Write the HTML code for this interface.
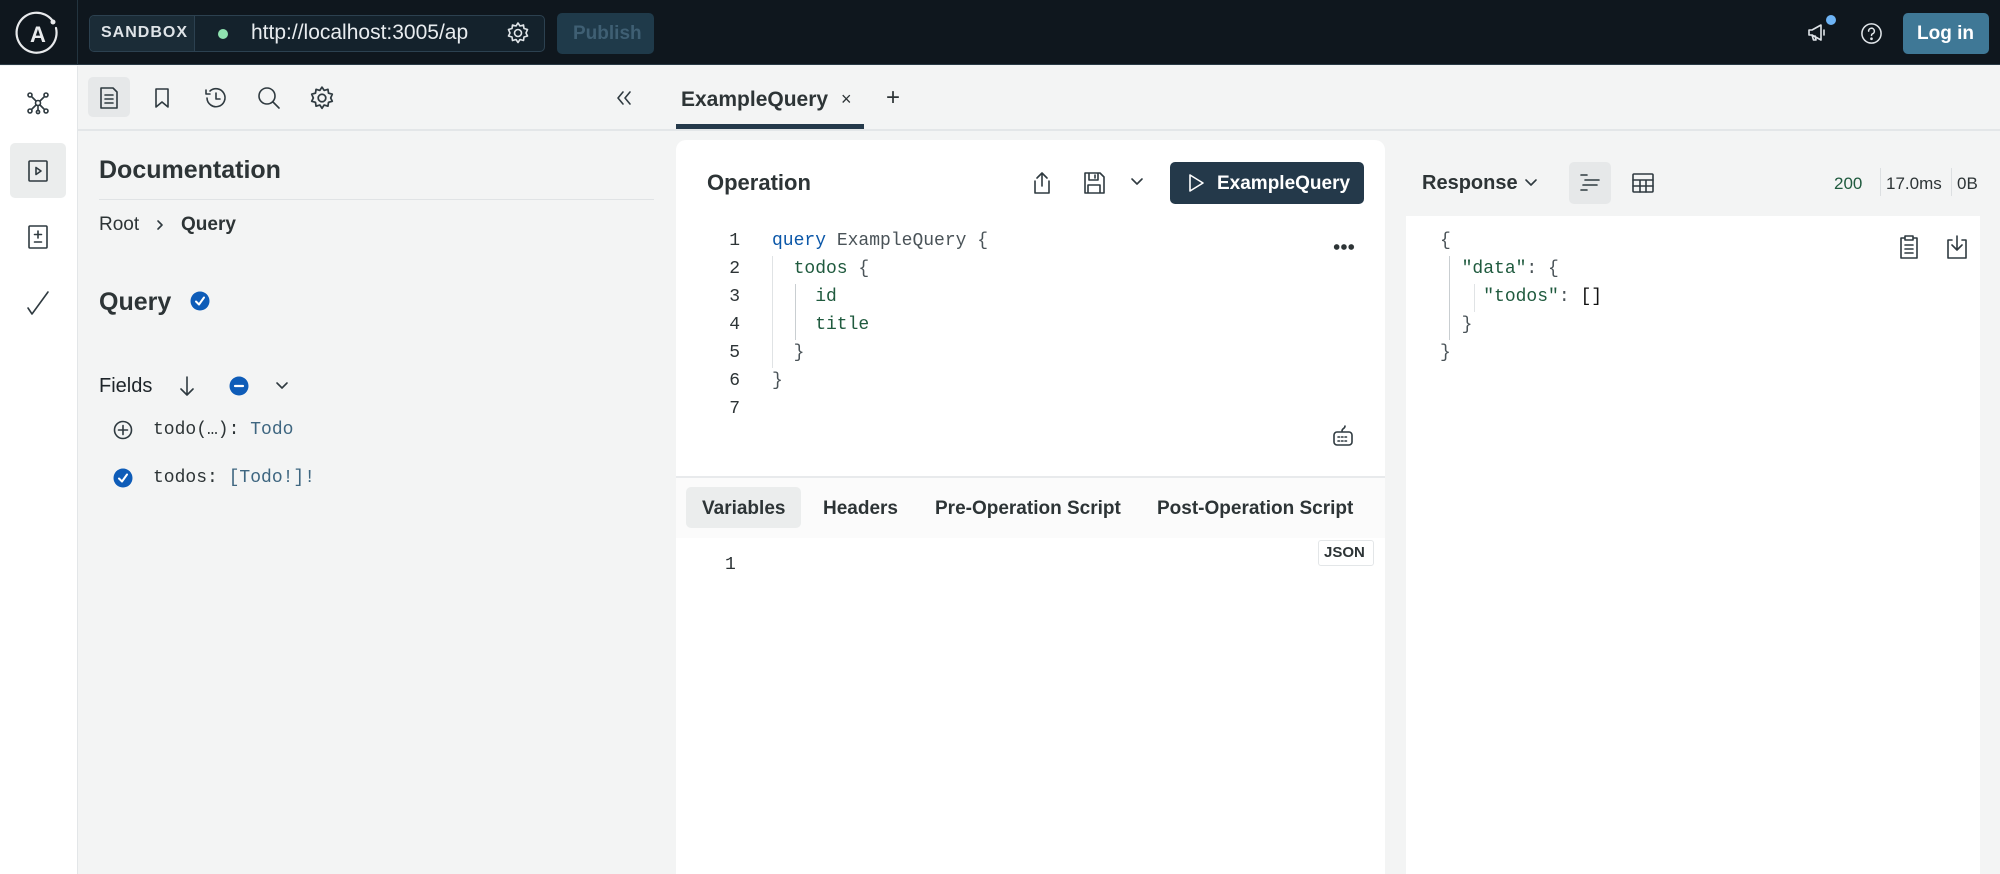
<!DOCTYPE html>
<html><head><meta charset="utf-8"><style>
*{box-sizing:border-box;margin:0;padding:0}
body{width:2000px;height:874px;overflow:hidden;background:#f3f4f4;font-family:"Liberation Sans",sans-serif;color:#2d3436;position:relative}
.a{position:absolute}
.mono{font-family:"Liberation Mono",monospace}
svg{position:absolute;fill:none;stroke:#2f3a40;stroke-width:1.6;stroke-linecap:round;stroke-linejoin:round}
.t{white-space:nowrap}
</style></head><body>
<!-- header -->
<div class="a" style="left:0;top:0;width:2000px;height:65px;background:#0f171e;border-bottom:1px solid #2a3a45"></div>
<div class="a" style="left:77px;top:0;width:1px;height:65px;background:#23343f"></div>
<svg style="left:14px;top:10px" width="48" height="46" viewBox="0 0 48 46"><path d="M38 10 A20 20 0 1 0 42 18" stroke="#e8eaec" stroke-width="2.2"/><circle cx="39" cy="12" r="2.5" fill="#e8eaec" stroke="none"/><text x="24" y="32" font-family="Liberation Sans" font-weight="bold" font-size="22" fill="#e8eaec" stroke="none" text-anchor="middle">A</text></svg>
<div class="a" style="left:89px;top:15px;width:456px;height:37px;border:1px solid #2c4150;border-radius:5px;background:#14222c"></div>
<div class="a" style="left:90px;top:16px;width:105px;height:35px;background:#1b2c37;border-right:1px solid #2c4150;border-radius:4px 0 0 4px"></div>
<div class="a t" style="left:101px;top:24px;font-size:16px;letter-spacing:1px;color:#dfe4e8;font-weight:bold">SANDBOX</div>
<div class="a" style="left:218px;top:29px;width:10px;height:10px;border-radius:50%;background:#8fe3b0"></div>
<div class="a t" style="left:251px;top:21px;font-size:21px;color:#e8ecef">http://localhost:3005/ap</div>
<svg style="left:506px;top:21px;stroke:#dfe4e8" width="24" height="24" viewBox="0 0 24 24"><circle cx="12" cy="12" r="3.5"/><path d="M12 2l2 3 3.5-1 .5 3.5 3.5 1-1.5 3.5 1.5 3-3.5 1-.5 3.5-3.5-1-2 3-2-3-3.5 1-.5-3.5-3.5-1 1.5-3-1.5-3.5 3.5-1 .5-3.5 3.5 1z"/></svg>
<div class="a" style="left:557px;top:13px;width:97px;height:41px;border-radius:5px;background:#1f3a4a"></div>
<div class="a t" style="left:573px;top:23px;font-size:19px;color:#3f5f73;font-weight:bold">Publish</div>
<svg style="left:1806px;top:22px;stroke:#dfe4e8" width="24" height="22" viewBox="0 0 24 22"><path d="M3 8v5h3l9 5V3L6 8z M6 13l1.5 5h2.5l-1-4 M18 8v5"/></svg>
<div class="a" style="left:1826px;top:15px;width:10px;height:10px;border-radius:50%;background:#6eb4f5"></div>
<svg style="left:1860px;top:22px;stroke:#dfe4e8" width="23" height="23" viewBox="0 0 24 24"><circle cx="12" cy="12" r="10"/><path d="M9 9.5a3 3 0 1 1 4 2.8c-.8.4-1 .9-1 1.7"/><circle cx="12" cy="17.5" r=".6" fill="#dfe4e8"/></svg>
<div class="a" style="left:1903px;top:13px;width:86px;height:41px;border-radius:5px;background:#3f7896"></div>
<div class="a t" style="left:1917px;top:23px;font-size:19px;color:#fff;font-weight:bold">Log in</div>
<!-- left rail -->
<div class="a" style="left:0;top:66px;width:78px;height:808px;background:#fff;border-right:1px solid #e3e6e8"></div>
<svg style="left:26px;top:91px" width="24" height="24" viewBox="0 0 24 24"><circle cx="12" cy="12" r="2.5"/><circle cx="4" cy="4" r="2"/><circle cx="20" cy="4" r="2"/><circle cx="4" cy="20" r="2"/><circle cx="20" cy="20" r="2"/><circle cx="12" cy="21" r="1.6"/><path d="M5.5 5.5l4.5 4.5M18.5 5.5L14 10M5.5 18.5L10 14M18.5 18.5L14 14M12 14.5v5"/></svg>
<div class="a" style="left:10px;top:143px;width:56px;height:55px;border-radius:5px;background:#ebeded"></div>
<svg style="left:27px;top:159px" width="22" height="24" viewBox="0 0 22 24"><rect x="2" y="2" width="18" height="20" rx="1"/><path d="M9 8.5v7l5-3.5z"/></svg>
<svg style="left:27px;top:224px" width="22" height="26" viewBox="0 0 22 26"><rect x="2" y="2" width="18" height="22" rx="1"/><path d="M11 7v7M7.5 10.5h7M7.5 18h7"/></svg>
<svg style="left:25px;top:290px" width="26" height="26" viewBox="0 0 26 26"><path d="M3 18l4 6L23 2"/></svg>
<!-- docs panel -->
<div class="a" style="left:88px;top:77px;width:42px;height:40px;border-radius:5px;background:#e6e8e9"></div>
<svg style="left:98px;top:86px" width="22" height="24" viewBox="0 0 22 24"><path d="M3 2h12l4 4v16H3z M7 9h8M7 13h8M7 17h8"/></svg>
<svg style="left:152px;top:87px" width="20" height="22" viewBox="0 0 20 22"><path d="M4 2h12v18l-6-5-6 5z"/></svg>
<svg style="left:203px;top:85px" width="26" height="26" viewBox="0 0 26 26"><path d="M4 13a9 9 0 1 0 3-7 M3 5v4h4 M13 8v6h4"/></svg>
<svg style="left:256px;top:85px" width="26" height="26" viewBox="0 0 26 26"><circle cx="11" cy="11" r="8"/><path d="M17 17l6 6"/></svg>
<svg style="left:309px;top:85px" width="26" height="26" viewBox="0 0 24 24"><circle cx="12" cy="12" r="3.5"/><path d="M12 2l2 3 3.5-1 .5 3.5 3.5 1-1.5 3.5 1.5 3-3.5 1-.5 3.5-3.5-1-2 3-2-3-3.5 1-.5-3.5-3.5-1 1.5-3-1.5-3.5 3.5-1 .5-3.5 3.5 1z"/></svg>
<svg style="left:614px;top:88px" width="20" height="20" viewBox="0 0 20 20"><path d="M9 4l-5 6 5 6M16 4l-5 6 5 6"/></svg>
<div class="a" style="left:78px;top:129px;width:598px;height:2px;background:#e3e6e8"></div>
<div class="a t" style="left:99px;top:156px;font-size:25px;font-weight:bold;color:#2d3436">Documentation</div>
<div class="a" style="left:99px;top:199px;width:555px;height:1px;background:#e0e3e5"></div>
<div class="a t" style="left:99px;top:214px;font-size:19px;color:#2d3436">Root</div>
<svg style="left:153px;top:218px" width="14" height="14" viewBox="0 0 14 14"><path d="M5 3l4 4-4 4"/></svg>
<div class="a t" style="left:181px;top:214px;font-size:19px;font-weight:bold;color:#2d3436">Query</div>
<div class="a t" style="left:99px;top:288px;font-size:25px;font-weight:bold;color:#2d3436">Query</div>
<svg style="left:190px;top:291px;stroke:#fff;stroke-width:2" width="20" height="20" viewBox="0 0 20 20"><circle cx="10" cy="10" r="9.5" fill="#0e5cb8" stroke="none"/><path d="M6 10.5l3 3 5-7"/></svg>
<div class="a t" style="left:99px;top:375px;font-size:20px;color:#1d2429">Fields</div>
<svg style="left:177px;top:375px" width="20" height="22" viewBox="0 0 20 22"><path d="M10 2v18M4 14l6 6 6-6"/></svg>
<svg style="left:229px;top:376px;stroke:#fff;stroke-width:2.2" width="20" height="20" viewBox="0 0 20 20"><circle cx="10" cy="10" r="9.5" fill="#0e5cb8" stroke="none"/><path d="M6 10h8"/></svg>
<svg style="left:274px;top:380px" width="16" height="12" viewBox="0 0 16 12"><path d="M3 3l5 5 5-5"/></svg>
<svg style="left:113px;top:420px" width="20" height="20" viewBox="0 0 20 20"><circle cx="10" cy="10" r="8.5"/><path d="M10 5.5v9M5.5 10h9"/></svg>
<div class="a t mono" style="left:153px;top:420px;font-size:18px;color:#2d3436">todo(…): <span style="color:#3e6680">Todo</span></div>
<svg style="left:113px;top:468px;stroke:#fff;stroke-width:2" width="20" height="20" viewBox="0 0 20 20"><circle cx="10" cy="10" r="9.5" fill="#0e5cb8" stroke="none"/><path d="M6 10.5l3 3 5-7"/></svg>
<div class="a t mono" style="left:153px;top:468px;font-size:18px;color:#2d3436">todos: <span style="color:#3e6680">[Todo!]!</span></div>
<!-- tab -->
<div class="a t" style="left:681px;top:88px;font-size:21px;font-weight:bold;color:#2d3436">ExampleQuery</div>
<div class="a t" style="left:841px;top:89px;font-size:18px;color:#2d3436">×</div>
<div class="a t" style="left:886px;top:84px;font-size:24px;color:#2d3436">+</div>
<div class="a" style="left:676px;top:124px;width:188px;height:5px;background:#24394a"></div>
<div class="a" style="left:676px;top:129px;width:1324px;height:2px;background:#e3e6e8"></div>
<!-- operation card -->
<div class="a" style="left:676px;top:140px;width:709px;height:734px;background:#fff;border-radius:10px 10px 0 0"></div>
<div class="a t" style="left:707px;top:170px;font-size:22px;font-weight:bold;color:#2d3436">Operation</div>
<svg style="left:1030px;top:170px" width="24" height="26" viewBox="0 0 24 26"><path d="M12 16V3M7 8l5-5 5 5M5 11v12h14V11"/></svg>
<svg style="left:1082px;top:171px" width="24" height="24" viewBox="0 0 24 24"><path d="M3 2h15l4 4v16H3z M7 2v7h9V2 M13 4v3 M6 22v-8h12v8"/></svg>
<svg style="left:1129px;top:176px" width="16" height="12" viewBox="0 0 16 12"><path d="M3 3l5 5 5-5"/></svg>
<div class="a" style="left:1170px;top:162px;width:194px;height:42px;border-radius:5px;background:#24394a"></div>
<svg style="left:1187px;top:173px;stroke:#fff" width="18" height="20" viewBox="0 0 18 20"><path d="M3 2v16l13-8z"/></svg>
<div class="a t" style="left:1217px;top:173px;font-size:19px;font-weight:bold;color:#fff">ExampleQuery</div>
<div class="a mono" style="left:720px;top:227px;width:20px;font-size:18px;line-height:28px;color:#2d3436;text-align:right">1<br>2<br>3<br>4<br>5<br>6<br>7</div>
<div class="a" style="left:772px;top:256px;width:1px;height:112px;background:#e0e3e5"></div>
<div class="a" style="left:795px;top:284px;width:1px;height:56px;background:#c9ced1"></div>
<div class="a mono t" style="left:772px;top:227px;font-size:18px;line-height:28px;color:#1f5a3e">
<span style="color:#0b57a8">query</span> <span style="color:#4a5358">ExampleQuery {</span><br>
&nbsp;&nbsp;todos <span style="color:#4a5358">{</span><br>
&nbsp;&nbsp;&nbsp;&nbsp;id<br>
&nbsp;&nbsp;&nbsp;&nbsp;title<br>
&nbsp;&nbsp;<span style="color:#4a5358">}</span><br>
<span style="color:#4a5358">}</span></div>
<div class="a" style="left:1333px;top:244px;width:22px;height:6px;background:radial-gradient(circle,#2d3436 2.6px,transparent 3px) 0 0/7.3px 6px repeat-x"></div>
<svg style="left:1331px;top:424px" width="24" height="24" viewBox="0 0 24 24"><path d="M14 2c0 3-3 2-3 5"/><rect x="3" y="8" width="18" height="13" rx="3"/><path d="M7 13h10M7 17h10" stroke-dasharray="1.5 2"/></svg>
<div class="a" style="left:676px;top:476px;width:709px;height:2px;background:#e8eaec"></div>
<div class="a" style="left:676px;top:478px;width:709px;height:60px;background:#fbfbfb"></div>
<div class="a" style="left:686px;top:487px;width:115px;height:41px;border-radius:5px;background:#ebeded"></div>
<div class="a t" style="left:702px;top:498px;font-size:19px;font-weight:bold;color:#2d3436">Variables</div>
<div class="a t" style="left:823px;top:498px;font-size:19px;font-weight:bold;color:#2d3436">Headers</div>
<div class="a t" style="left:935px;top:498px;font-size:19px;font-weight:bold;color:#2d3436">Pre-Operation Script</div>
<div class="a t" style="left:1157px;top:498px;font-size:19px;font-weight:bold;color:#2d3436">Post-Operation Script</div>
<div class="a" style="left:1318px;top:540px;width:56px;height:26px;border:1px solid #e3e6e8;border-radius:3px;background:#fff"></div>
<div class="a t" style="left:1324px;top:544px;font-size:15px;font-weight:bold;color:#2d3436">JSON</div>
<div class="a mono" style="left:725px;top:555px;font-size:18px;color:#2d3436">1</div>
<!-- response -->
<div class="a t" style="left:1422px;top:172px;font-size:20px;font-weight:bold;color:#2d3436">Response</div>
<svg style="left:1523px;top:177px" width="16" height="12" viewBox="0 0 16 12"><path d="M3 3l5 5 5-5"/></svg>
<div class="a" style="left:1569px;top:162px;width:42px;height:42px;border-radius:5px;background:#e6e8e9"></div>
<svg style="left:1578px;top:172px" width="24" height="22" viewBox="0 0 24 22"><path d="M3 3h6M7 8h14M5 13h14M3 18h6"/></svg>
<svg style="left:1631px;top:172px" width="24" height="22" viewBox="0 0 24 22"><rect x="2" y="2" width="20" height="18" rx="1"/><path d="M2 8h20M2 14h20M9 8v12M15 8v12"/></svg>
<div class="a t" style="left:1834px;top:174px;font-size:17px;color:#1f5a3e">200</div>
<div class="a" style="left:1880px;top:168px;width:1px;height:28px;background:#dcdfe1"></div>
<div class="a t" style="left:1886px;top:174px;font-size:17px;color:#2d3436">17.0ms</div>
<div class="a" style="left:1951px;top:168px;width:1px;height:28px;background:#dcdfe1"></div>
<div class="a t" style="left:1957px;top:174px;font-size:17px;color:#2d3436">0B</div>
<div class="a" style="left:1406px;top:216px;width:574px;height:658px;background:#fff"></div>
<div class="a" style="left:1449px;top:256px;width:1px;height:84px;background:#c9ced1"></div>
<div class="a" style="left:1474px;top:284px;width:1px;height:28px;background:#e0e3e5"></div>
<div class="a mono t" style="left:1440px;top:227px;font-size:18px;line-height:28px;color:#4a5358">{<br>
&nbsp;&nbsp;<span style="color:#1f5a3e">"data"</span>: {<br>
&nbsp;&nbsp;&nbsp;&nbsp;<span style="color:#1f5a3e">"todos"</span>: <span style="color:#111">[]</span><br>
&nbsp;&nbsp;}<br>}</div>
<svg style="left:1898px;top:234px" width="22" height="26" viewBox="0 0 22 26"><path d="M7 4H3v20h16V4h-4 M7 2h8v4H7z M7 11h8M7 15h8M7 19h8"/></svg>
<svg style="left:1945px;top:234px" width="24" height="26" viewBox="0 0 24 26"><path d="M12 2v14M7 11l5 5 5-5M7 6H3v18h18V6h-4"/></svg>
</body></html>
